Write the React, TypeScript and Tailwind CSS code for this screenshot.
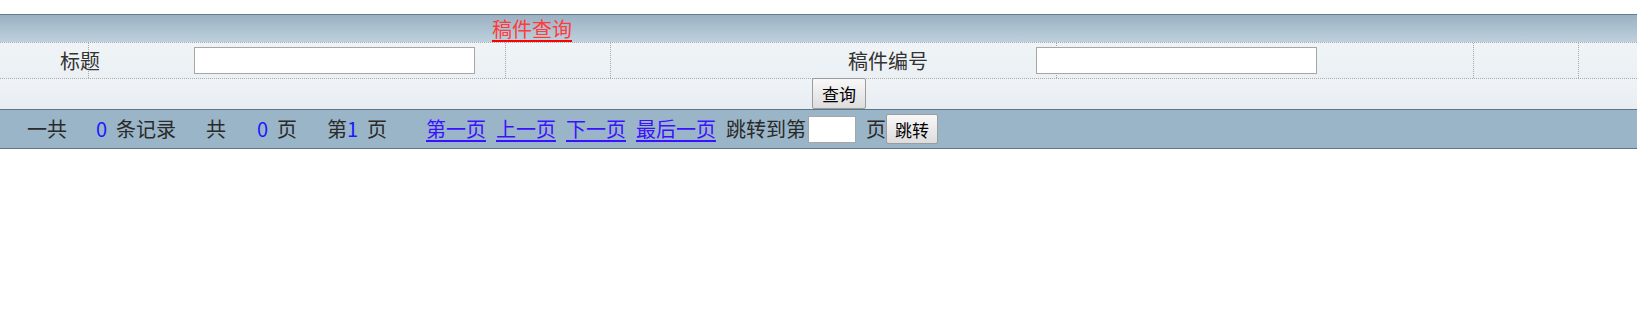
import React from "react";

const font = { fontFamily: '"Noto Sans CJK SC", "Liberation Sans", sans-serif' };

export default function App() {
  return (
    <div className="w-[1637px] h-[311px] bg-white pt-[14px]" style={font}>
      {/* header */}
      <div className="h-[28px] border-t border-[#5f7d8c] bg-gradient-to-b from-[#9bb2c3] to-[#bdd0dd] flex items-center">
        <a className="ml-[492px] text-[20px] leading-none text-[#ff3b3b] underline decoration-[#ff0000] underline-offset-[3px] cursor-pointer">
          稿件查询
        </a>
      </div>
      {/* row 1 */}
      <div className="h-[37px] flex border-t border-b border-dotted border-[#a9a9a9] bg-gradient-to-b from-[#f0f4f7] to-[#eaf0f4] text-[20px] text-[#333]">
        <div className="w-[89px] shrink-0 border-r border-dotted border-[#a9a9a9] flex items-center overflow-visible relative z-10">
          <span className="ml-[60px] whitespace-nowrap leading-none">标题</span>
        </div>
        <div className="w-[417px] shrink-0 border-r border-dotted border-[#a9a9a9] flex items-center">
          <input className="ml-[105px] w-[281px] h-[27px] bg-white border border-[#a6a6a6] outline-none" />
        </div>
        <div className="w-[105px] shrink-0 border-r border-dotted border-[#a9a9a9]" />
        <div className="w-[446px] shrink-0 border-r border-dotted border-[#a9a9a9] flex items-center">
          <span className="ml-[237px] whitespace-nowrap leading-none">稿件编号</span>
        </div>
        <div className="w-[417px] shrink-0 border-r border-dotted border-[#a9a9a9] flex items-center">
          <input className="ml-[-21px] w-[281px] h-[27px] bg-white border border-[#a6a6a6] outline-none relative" />
        </div>
        <div className="w-[105px] shrink-0 border-r border-dotted border-[#a9a9a9]" />
        <div className="flex-1" />
      </div>
      {/* row 2 */}
      <div className="h-[30px] flex items-start bg-gradient-to-b from-[#eff3f6] to-[#e7edf2]">
        <button className="ml-[812px] mt-[-1px] w-[54px] h-[31px] border border-[#9c9c9c] rounded-[2px] bg-gradient-to-b from-[#f8f8f8] to-[#dddddd] text-[17px] text-black leading-none">
          查询
        </button>
      </div>
      {/* pager bar */}
      <div className="h-[40px] border-t border-b border-[#5b7787] bg-[#9ab5c7] flex items-center text-[20px] text-[#2a2a2a] leading-none whitespace-nowrap">
        <span className="ml-[27px] w-[40px]">一共</span>
        <span className="ml-[29px] w-[11px] text-[#1a1aff]">0</span>
        <span className="ml-[9px] w-[60px]">条记录</span>
        <span className="ml-[30px] w-[20px]">共</span>
        <span className="ml-[31px] w-[11px] text-[#1a1aff]">0</span>
        <span className="ml-[9px] w-[20px]">页</span>
        <span className="ml-[30px] w-[20px]">第</span>
        <span className="w-[10px] text-[#1a1aff]">1</span>
        <span className="ml-[10px] w-[20px]">页</span>
        <a className="ml-[39px] w-[60px] text-[#3a12ff] underline underline-offset-[3px] cursor-pointer">第一页</a>
        <a className="ml-[10px] w-[60px] text-[#3a12ff] underline underline-offset-[3px] cursor-pointer">上一页</a>
        <a className="ml-[10px] w-[60px] text-[#3a12ff] underline underline-offset-[3px] cursor-pointer">下一页</a>
        <a className="ml-[10px] w-[80px] text-[#3a12ff] underline underline-offset-[3px] cursor-pointer">最后一页</a>
        <span className="ml-[10px] w-[80px]">跳转到第</span>
        <input className="ml-[2px] w-[48px] h-[27px] bg-white border border-[#a6a6a6] outline-none" />
        <span className="ml-[10px] w-[20px]">页</span>
        <button className="w-[52px] h-[30px] border border-[#9c9c9c] rounded-[2px] bg-gradient-to-b from-[#f8f8f8] to-[#dddddd] text-[17px] text-black leading-none">
          跳转
        </button>
      </div>
    </div>
  );
}
